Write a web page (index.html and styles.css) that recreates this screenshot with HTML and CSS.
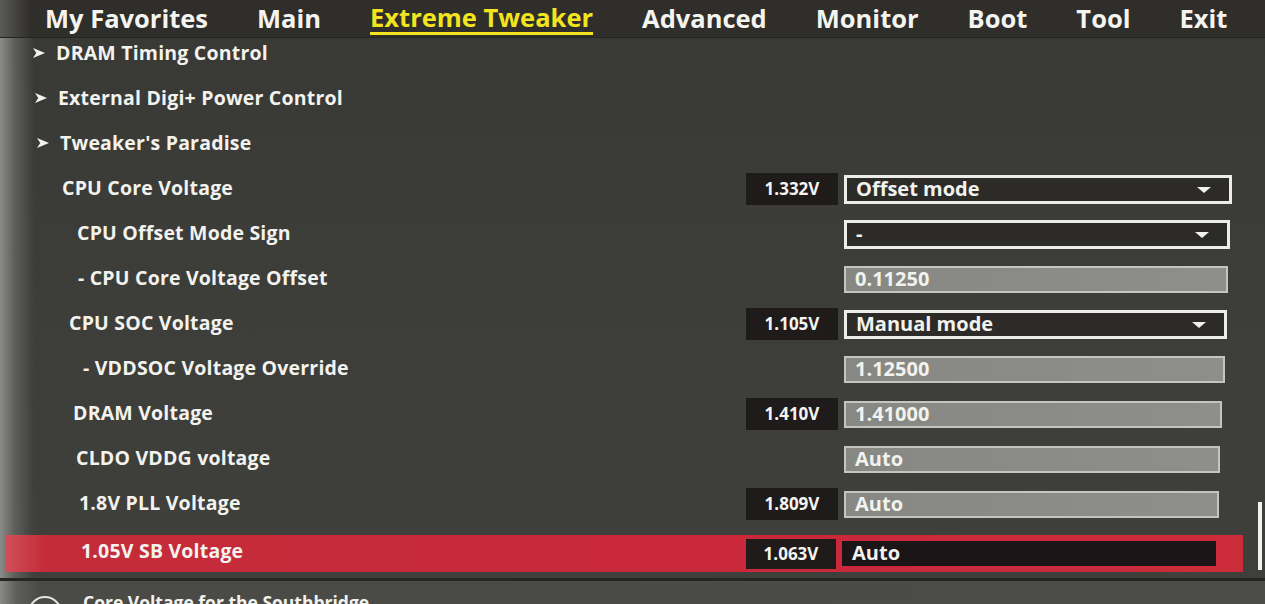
FILE: index.html
```html
<!DOCTYPE html>
<html lang="en">
<head>
<meta charset="utf-8">
<title>Extreme Tweaker</title>
<link rel="stylesheet" href="styles.css">
</head>
<body>
<div class="screen">
  <nav class="tabs">
    <span class="tab">My Favorites</span>
    <span class="tab">Main</span>
    <span class="tab active">Extreme Tweaker</span>
    <span class="tab">Advanced</span>
    <span class="tab">Monitor</span>
    <span class="tab">Boot</span>
    <span class="tab">Tool</span>
    <span class="tab">Exit</span>
  </nav>

  <div class="list">
    <div class="row r1"><div class="label"><svg class="arrow" viewBox="0 0 11 9"><polygon points="0,0 11,4.5 0,9 3,4.5"/></svg>DRAM Timing Control</div></div>
    <div class="row r2"><div class="label"><svg class="arrow" viewBox="0 0 11 9"><polygon points="0,0 11,4.5 0,9 3,4.5"/></svg>External Digi+ Power Control</div></div>
    <div class="row r3"><div class="label"><svg class="arrow" viewBox="0 0 11 9"><polygon points="0,0 11,4.5 0,9 3,4.5"/></svg>Tweaker's Paradise</div></div>
    <div class="row r4">
      <div class="label">CPU Core Voltage</div>
      <div class="val">1.332V</div>
      <div class="ctl drop">Offset mode<span class="tri"></span></div>
    </div>
    <div class="row r5">
      <div class="label">CPU Offset Mode Sign</div>
      <div class="val empty"></div>
      <div class="ctl drop">-<span class="tri"></span></div>
    </div>
    <div class="row r6">
      <div class="label">- CPU Core Voltage Offset</div>
      <div class="val empty"></div>
      <div class="ctl field">0.11250</div>
    </div>
    <div class="row r7">
      <div class="label">CPU SOC Voltage</div>
      <div class="val">1.105V</div>
      <div class="ctl drop">Manual mode<span class="tri"></span></div>
    </div>
    <div class="row r8">
      <div class="label">- VDDSOC Voltage Override</div>
      <div class="val empty"></div>
      <div class="ctl field">1.12500</div>
    </div>
    <div class="row r9">
      <div class="label">DRAM Voltage</div>
      <div class="val">1.410V</div>
      <div class="ctl field">1.41000</div>
    </div>
    <div class="row r10">
      <div class="label">CLDO VDDG voltage</div>
      <div class="val empty"></div>
      <div class="ctl field">Auto</div>
    </div>
    <div class="row r11">
      <div class="label">1.8V PLL Voltage</div>
      <div class="val">1.809V</div>
      <div class="ctl field">Auto</div>
    </div>
    <div class="row r12 selected">
      <div class="label">1.05V SB Voltage</div>
      <div class="val">1.063V</div>
      <div class="ctl sel">Auto</div>
    </div>
  </div>

  <div class="help">
    <span class="info"></span>
    <span class="help-text">Core Voltage for the Southbridge</span>
  </div>

  <div class="thumb"></div>
</div>
</body>
</html>
```

FILE: styles.css
```css
* { box-sizing: border-box; }

html, body {
  margin: 0;
  padding: 0;
  width: 1265px;
  height: 604px;
  overflow: hidden;
  background: #3b3b37;
}

.screen {
  position: relative;
  width: 1265px;
  height: 604px;
  overflow: hidden;
  font-family: "Open Sans", "DejaVu Sans", sans-serif;
  font-weight: 700;
  color: #f2f2ee;
  background:
    linear-gradient(90deg, #8c8c8a 0px, #5f5f5c 14px, rgba(59,59,55,0) 34px),
    linear-gradient(180deg, #383835 0px, #3d3d39 300px, #3f3f3b 604px);
}

/* top tabs */
.tabs {
  height: 38px;
  display: flex;
  align-items: flex-start;
  gap: 49px;
  padding-left: 45px;
  padding-top: 2px;
  background: linear-gradient(90deg, rgba(120,120,118,0.6) 0px, rgba(46,45,42,0) 30px), #2f2e2b;
  border-bottom: 1px solid #252522;
}

.tab {
  font-size: 25.5px;
  line-height: 33px;
  color: #f4f4f0;
}

.tab.active {
  color: #f2e41e;
  border-bottom: 3px solid #f2e41e;
  line-height: 30px;
}

/* list */
.list {
  display: flex;
  flex-direction: column;
}

.row {
  height: 45px;
  display: grid;
  grid-template-columns: 740px 92px var(--cw, 388px);
  column-gap: 6px;
  align-items: start;
  --ind: 62px;
}

.label {
  font-size: 19.5px;
  letter-spacing: 0.2px;
  line-height: 30px;
  padding-left: var(--ind);
  display: flex;
  align-items: center;
  white-space: nowrap;
}

.arrow {
  width: 12px;
  height: 10px;
  fill: #f2f2ee;
  margin-left: -23px;
  margin-right: 11px;
}

.r1 { --ind: 56px; }
.r2 { --ind: 58px; }
.r3 { --ind: 60px; }
.r4 { --ind: 62px; --cw: 388px; }
.r5 { --ind: 77px; --cw: 386px; }
.r6 { --ind: 78px; --cw: 384px; }
.r7 { --ind: 69px; --cw: 383px; }
.r8 { --ind: 83px; --cw: 381px; }
.r9 { --ind: 73px; --cw: 378px; }
.r10 { --ind: 76px; --cw: 376px; }
.r11 { --ind: 79px; --cw: 375px; }
.r12 { --ind: 76px; --cw: 374px; }

.val {
  height: 32px;
  background: #1f1b1b;
  font-size: 17px;
  line-height: 32px;
  text-align: center;
  color: #f4f4f0;
}

.val.empty { background: transparent; }

.ctl {
  height: 29px;
  font-size: 20px;
  line-height: 22px;
  padding-left: 9px;
  position: relative;
  white-space: nowrap;
}

.drop {
  margin-top: 2px;
  background: #2d2b28;
  border: 3px solid #ecece8;
}

.tri {
  position: absolute;
  right: 18px;
  top: 9px;
  width: 0;
  height: 0;
  border-left: 7px solid transparent;
  border-right: 7px solid transparent;
  border-top: 6px solid #f2f2ee;
}

.field {
  margin-top: 3px;
  height: 27px;
  background: linear-gradient(90deg, #878884, #8e8f8a);
  border: 2px solid #c4c5bf;
  line-height: 22px;
}

/* selected row */
.row.selected {
  margin-top: 2px;
  height: 37px;
  margin-left: 5px;
  width: 1238px;
  background: linear-gradient(90deg, #d0505a 0px, #c42c39 40px, #c8283a 600px, #cc2b3a 1238px);
  grid-template-columns: 735px 90px var(--cw);
  align-items: center;
}

.row.selected .label {
  line-height: 30px;
  padding-bottom: 5px;
}

.row.selected .val {
  height: 30px;
  line-height: 30px;
}

.sel {
  height: 25px;
  line-height: 24px;
  background: #1c1517;
  border: none;
  padding-left: 10px;
}

/* bottom help */
.help {
  position: absolute;
  left: 0;
  top: 578px;
  width: 1265px;
  height: 26px;
  border-top: 3px solid #262623;
  background: linear-gradient(90deg, #8a8a88 0px, #5e5e5b 16px, #4a4a47 40px, #4b4b48 1265px);
  display: flex;
  align-items: flex-start;
}

.info {
  width: 34px;
  height: 34px;
  margin-left: 28px;
  margin-top: 15px;
  border: 2px solid #e4e4e0;
  border-radius: 50%;
  flex: none;
}

.help-text {
  margin-left: 21px;
  margin-top: 11px;
  font-size: 17.5px;
  line-height: 20px;
  color: #f2f2ee;
}

.thumb {
  position: absolute;
  left: 1258px;
  top: 502px;
  width: 4px;
  height: 68px;
  background: #f2f2f2;
}
```
